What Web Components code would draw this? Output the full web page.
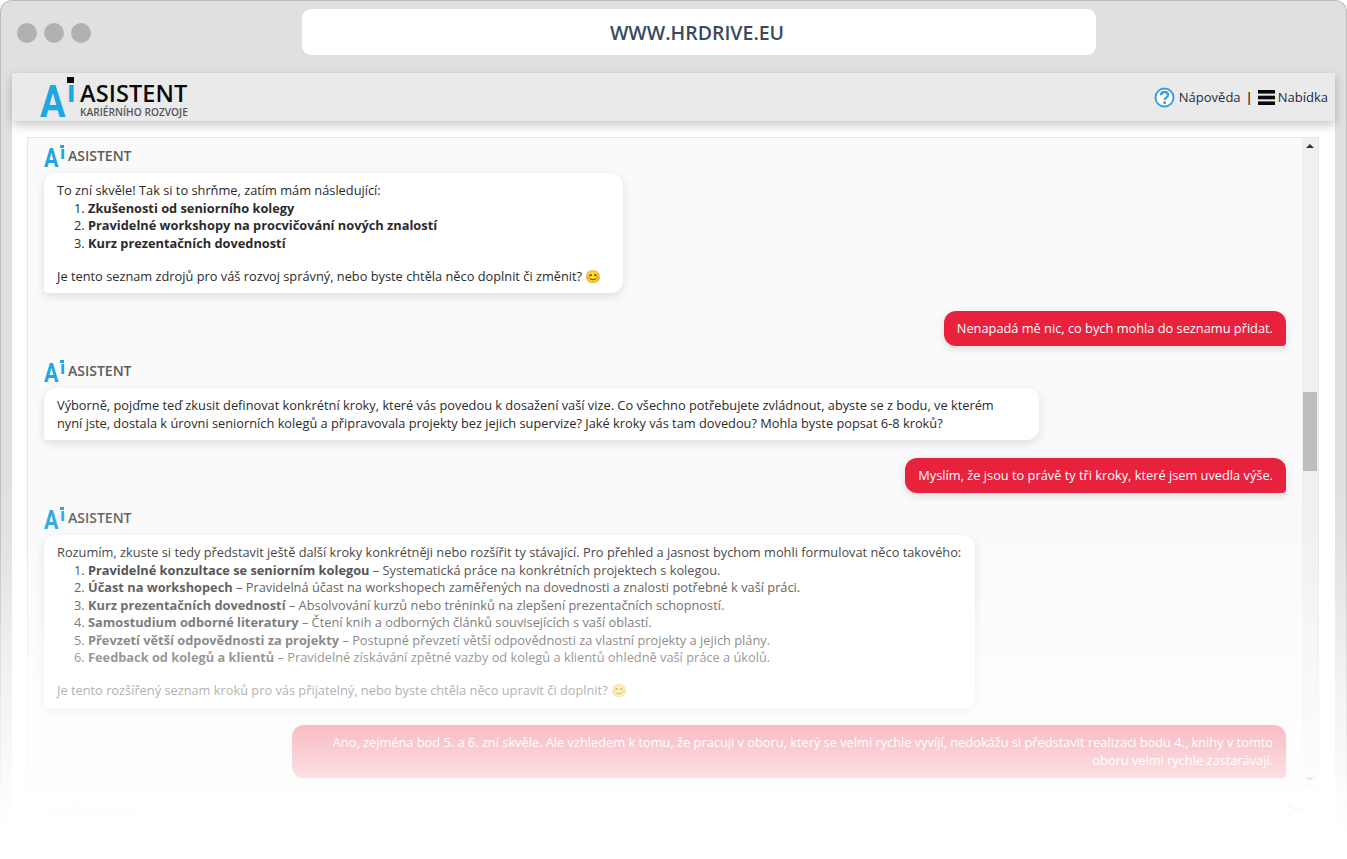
<!DOCTYPE html>
<html lang="cs">
<head>
<meta charset="utf-8">
<title>HR Drive AI asistent</title>
<style>
html, body { margin: 0; height: 859px; overflow: hidden; background: #fff; font-family: "Open Sans", "Liberation Sans", sans-serif; }
</style>
</head>
<body>
<browser-frame url="WWW.HRDRIVE.EU">
  <app-header></app-header>
  <chat-panel>
    <ai-msg width="579">
      To zní skvěle! Tak si to shrňme, zatím mám následující:
      <ol>
        <li><b>Zkušenosti od seniorního kolegy</b></li>
        <li><b>Pravidelné workshopy na procvičování nových znalostí</b></li>
        <li><b>Kurz prezentačních dovedností</b></li>
      </ol>
      <p>Je tento seznam zdrojů pro váš rozvoj správný, nebo byste chtěla něco doplnit či změnit? 😊</p>
    </ai-msg>
    <user-msg>Nenapadá mě nic, co bych mohla do seznamu přidat.</user-msg>
    <ai-msg width="995">Výborně, pojďme teď zkusit definovat konkrétní kroky, které vás povedou k dosažení vaší vize. Co všechno potřebujete zvládnout, abyste se z bodu, ve kterém<br>nyní jste, dostala k úrovni seniorních kolegů a připravovala projekty bez jejich supervize? Jaké kroky vás tam dovedou? Mohla byste popsat 6-8 kroků?</ai-msg>
    <user-msg>Myslím, že jsou to právě ty tři kroky, které jsem uvedla výše.</user-msg>
    <ai-msg width="931">
      Rozumím, zkuste si tedy představit ještě další kroky konkrétněji nebo rozšířit ty stávající. Pro přehled a jasnost bychom mohli formulovat něco takového:
      <ol>
        <li><b>Pravidelné konzultace se seniorním kolegou</b> – Systematická práce na konkrétních projektech s kolegou.</li>
        <li><b>Účast na workshopech</b> – Pravidelná účast na workshopech zaměřených na dovednosti a znalosti potřebné k vaší práci.</li>
        <li><b>Kurz prezentačních dovedností</b> – Absolvování kurzů nebo tréninků na zlepšení prezentačních schopností.</li>
        <li><b>Samostudium odborné literatury</b> – Čtení knih a odborných článků souvisejících s vaší oblastí.</li>
        <li><b>Převzetí větší odpovědnosti za projekty</b> – Postupné převzetí větší odpovědnosti za vlastní projekty a jejich plány.</li>
        <li><b>Feedback od kolegů a klientů</b> – Pravidelné získávání zpětné vazby od kolegů a klientů ohledně vaší práce a úkolů.</li>
      </ol>
      <p>Je tento rozšířený seznam kroků pro vás přijatelný, nebo byste chtěla něco upravit či doplnit? 😊</p>
    </ai-msg>
    <user-msg width="994">Ano, zejména bod 5. a 6. zní skvěle. Ale vzhledem k tomu, že pracuji v oboru, který se velmi rychle vyvíjí, nedokážu si představit realizaci bodu 4., knihy v tomto oboru velmi rychle zastarávají.</user-msg>
  </chat-panel>
  <chat-input></chat-input>
</browser-frame>
<fade-veil></fade-veil>

<script>
// small helper, every element is just a style + markup string
function define(name, html, setup) {
  customElements.define(name, class extends HTMLElement {
    connectedCallback() {
      if (this.shadowRoot) return
      this.attachShadow({ mode: 'open' }).innerHTML = html
      if (setup) setup(this)
    }
  })
}

define('browser-frame', `
<style>
  :host { display: block; box-sizing: border-box; height: 859px; background: #e0e0e0; border: 1px solid #bdbdbd; border-bottom: 0; border-radius: 12px 12px 0 0; }
  .top { height: 72px; display: flex; align-items: flex-start; padding: 8px 0 0 16px; box-sizing: border-box; }
  .dots { display: flex; gap: 7px; margin-top: 14px; }
  .dots i { width: 20px; height: 20px; border-radius: 50%; background: #b1b1b1; }
  .url { box-sizing: border-box; width: 794px; height: 46px; margin-left: 211px; padding-right: 4px; background: #fff; border-radius: 9px; display: flex; align-items: center; justify-content: center;
         font: 600 19.5px "Open Sans", sans-serif; color: #3b4a60; }
  .page { margin: 0 11px; background: #fff; height: 786px; }
</style>
<div class="top">
  <div class="dots"><i></i><i></i><i></i></div>
  <div class="url"></div>
</div>
<div class="page"><slot></slot></div>
`, el => { el.shadowRoot.querySelector('.url').textContent = el.getAttribute('url') })

define('ai-logo', `
<style>
  :host { display: inline-flex; align-items: flex-start; font-family: "Open Sans", sans-serif; position: relative; }
  .a { color: #1ea7e4; font: 700 var(--a-size, 22px)/1 Roboto, sans-serif; display: block; transform: scaleX(var(--a-sx, .9)); transform-origin: left; width: var(--a-width, 15px); margin-top: var(--a-top, 6px); }
  .i { display: block; position: relative; color: #1ea7e4; font: 700 var(--i-size, 19px)/1 Roboto, sans-serif; width: var(--i-width, 6px); margin-top: var(--i-top, 0); }
  .i::before { content: ""; position: absolute; left: var(--dot-left, 0); top: var(--dot-top, 0); width: var(--dot-w, 4px); height: var(--dot-h, 3px); background: var(--dot, #1ea7e4); }
  .words { margin-left: var(--gap, 4px); }
</style>
<span class="a">A</span><span class="i">ı</span><span class="words"><slot></slot></span>
`)

define('app-header', `
<style>
  :host { display: flex; align-items: center; justify-content: space-between; height: 48px; background: #eaeaea; box-shadow: 0 4px 10px rgba(0,0,0,.22); position: relative; z-index: 1; padding: 0 7px 0 28px; font-family: "Open Sans", sans-serif; }
  ai-logo { --a-size: 44px; --a-width: 27px; --a-sx: .86; --a-top: 7px; --i-size: 31px; --i-width: 7px; --i-top: 3px; --dot: #0a0a0a; --dot-w: 6.500px; --dot-h: 6px; --dot-left: 0; --dot-top: 1px; --gap: 6px; height: 48px; }
  .name { display: block; font: 600 23.500px/24px "Open Sans", sans-serif; color: #0b0b0b; margin-top: 8px; letter-spacing: .1px; white-space: nowrap; }
  .sub { display: block; font: 600 11.500px/13px "Open Sans", sans-serif; color: #555; transform: scaleX(.885); transform-origin: left; white-space: nowrap; width: 108px; }
  nav { display: flex; align-items: center; font-size: 13px; color: #1c2a44; }
  svg { display: block; }
  .sep { margin: 0 5px; color: #111; font-weight: 600; }
  .burger { margin-right: 3px; }
</style>
<ai-logo><span class="name">ASISTENT</span><span class="sub">KARIÉRNÍHO ROZVOJE</span></ai-logo>
<nav>
  <svg width="21" height="21" viewBox="0 0 21 21" style="margin-right:4px"><circle cx="10.5" cy="10.5" r="9" fill="#fff" stroke="#3f9ddd" stroke-width="2"/><path d="M7 8.300c0-2.100 1.500-3.300 3.500-3.300s3.500 1.200 3.500 3c0 2.500-3.300 2.600-3.300 4.900" fill="none" stroke="#3f9ddd" stroke-width="2.300"/><rect x="9.300" y="14.300" width="2.600" height="2.600" fill="#3f9ddd"/></svg>
  <span>Nápověda</span><span class="sep">|</span>
  <svg class="burger" width="17" height="15" viewBox="0 0 17 15"><rect y="0" width="17" height="3.600" fill="#0a0a0a"/><rect y="5.700" width="17" height="3.600" fill="#0a0a0a"/><rect y="11.400" width="17" height="3.600" fill="#0a0a0a"/></svg>
  <span>Nabídka</span>
</nav>
`)

define('chat-panel', `
<style>
  :host { display: flex; position: relative; box-sizing: border-box; margin: 16px 16px 0 15px; height: 651px; border: 1px solid #e6e6e6; background: #fafafa; overflow: hidden; font-family: "Open Sans", sans-serif; }
  .log { flex: 1; min-width: 0; padding: 7px 16px 0 16px; display: flex; flex-direction: column; }
  .bar { width: 16px; background: #f0f0f0; position: relative; flex: none; }
  .thumb { position: absolute; left: 1px; right: 1px; top: 254px; height: 79px; background: #bdbdbd; }
  .up, .down { position: absolute; left: 4px; width: 0; height: 0; border: 4px solid transparent; }
  .up { top: 2px; border-bottom-color: #333; }
  .down { bottom: 2px; border-top-color: #555; }
</style>
<div class="log"><slot></slot></div>
<div class="bar"><div class="up"></div><div class="thumb"></div><div class="down"></div></div>
`)

define('ai-msg', `
<style>
  :host { display: block; margin-bottom: 17.5px; }
  ai-logo { --a-size: 25px; --a-width: 16px; --a-sx: .86; --a-top: 1px; --i-size: 19px; --i-width: 4px; --i-top: -2px; --dot-w: 4px; --dot-h: 3px; --dot-top: 2px; --gap: 4px; height: 28px; display: flex; }
  .name { font: 600 14px/20px "Open Sans", sans-serif; color: #5c5c5c; display: block; margin-top: 1px; }
  .bubble { box-sizing: border-box; background: #fff; border-radius: 12px 12px 12px 4px; padding: 9px 13px 8px; font-size: 12.8px; line-height: 17.5px; color: #2b2b2b; box-shadow: 0 3px 10px rgba(0,0,0,.12); }
  ::slotted(ol) { margin: 0; padding-left: 31px; }
  ::slotted(p) { margin: 15.5px 0 0; }
</style>
<ai-logo><span class="name">ASISTENT</span></ai-logo>
<div class="bubble"><slot></slot></div>
`, el => { el.shadowRoot.querySelector('.bubble').style.width = (+el.getAttribute('width') || 600) + 'px' })

define('user-msg', `
<style>
  :host { display: flex; justify-content: flex-end; margin-bottom: 14.5px; }
  .bubble { box-sizing: border-box; background: #e8213c; color: #fff; border-radius: 12px 12px 4px 12px; padding: 9px 13px 8.500px; font-size: 12.8px; line-height: 17.5px; text-align: right; box-shadow: 0 3px 8px rgba(0,0,0,.12); }
</style>
<div class="bubble"><slot></slot></div>
`, el => { if (el.getAttribute('width')) el.shadowRoot.querySelector('.bubble').style.width = el.getAttribute('width') + 'px' })

define('chat-input', `
<style>
  :host { display: flex; align-items: center; justify-content: space-between; box-sizing: border-box; margin: 0 16px 0 16px; height: 43px; border: 1px solid #e8e8e8; background: #fff; padding: 0 14px 0 17px; font: 13px "Open Sans", sans-serif; color: #777; }
</style>
<span>Napište zprávu</span>
<svg width="18" height="15" viewBox="0 0 18 15"><path d="M0 0l18 7.500L0 15l2-6 8-1.500-8-1.500z" fill="#3f9ddd"/></svg>
`)

define('fade-veil', `
<style>
  :host { position: absolute; left: 0; right: 0; top: 480px; height: 379px; pointer-events: none; z-index: 5;
    background: linear-gradient(to bottom, rgba(255,255,255,0) 0, rgba(255,255,255,.1) 17%, rgba(255,255,255,.3) 32%, rgba(255,255,255,.62) 55%, rgba(255,255,255,.7) 65%, rgba(255,255,255,.85) 78%, rgba(255,255,255,.97) 87%, #fff 95%); }
</style>
`)
</script>
</body>
</html>
